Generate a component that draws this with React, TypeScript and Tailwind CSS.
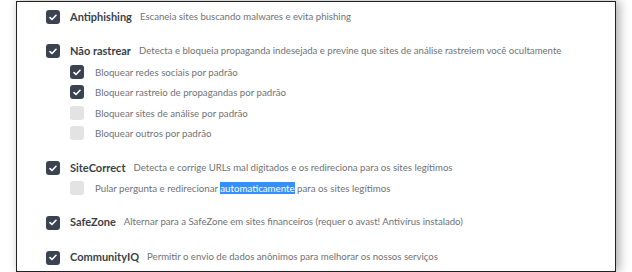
const font = { fontFamily: "Lato, 'Open Sans', sans-serif" }

const Box = ({ checked }: { checked: boolean }) => {
    return checked ? (
        <div className="w-[14px] h-[14px] rounded-[3px] bg-[#3b4350] flex items-center justify-center shrink-0">
            <svg width="8" height="7" viewBox="0 0 8 7">
                <path d="M1 3.6 L3 5.5 L7 1.3" fill="none" stroke="white" strokeWidth="1.6" strokeLinecap="round" strokeLinejoin="round" />
            </svg>
        </div>
    ) : (
        <div className="w-[14px] h-[14px] rounded-[3px] bg-[#e3e3e3] shrink-0" />
    )
}

const Main = ({ title, desc, className = "" }: { title: string, desc: string, className?: string }) => {
    return <div className={"flex items-center h-5 " + className}>
        <div className="w-[29px] shrink-0" />
        <Box checked={true} />
        <div className="ml-[10px] text-[11px] font-bold text-[#3a3f47] whitespace-nowrap">{title}</div>
        <div className="ml-[8px] text-[9.6px] text-[#6f7275] whitespace-nowrap">{desc}</div>
    </div>
}

const Sub = ({ checked, children }: { checked: boolean, children: React.ReactNode }) => {
    return <div className="flex items-center h-[20.33px]">
        <div className="w-[53px] shrink-0" />
        <Box checked={checked} />
        <div className="ml-[11px] text-[9.7px] text-[#6f7275] whitespace-nowrap">{children}</div>
    </div>
}

export default function App() {
    return <div className="w-[632px] h-[272px] bg-white overflow-hidden" style={font}>
        <div className="ml-[16px] mt-px w-[600px] h-[271px] border border-[#222] bg-white shadow-[3px_0_10px_rgba(0,0,0,0.35)] flex flex-col">
            <div className="h-[5px]" />
            <Main title="Antiphishing" desc="Escaneia sites buscando malwares e evita phishing" />
            <Main className="mt-[14px]" title="Não rastrear" desc="Detecta e bloqueia propaganda indesejada e previne que sites de análise rastreiem você ocultamente" />
            <div className="mt-px">
                <Sub checked={true}>Bloquear redes sociais por padrão</Sub>
                <Sub checked={true}>Bloquear rastreio de propagandas por padrão</Sub>
                <Sub checked={false}>Bloquear sites de análise por padrão</Sub>
                <Sub checked={false}>Bloquear outros por padrão</Sub>
            </div>
            <Main className="mt-[15px]" title="SiteCorrect" desc="Detecta e corrige URLs mal digitados e os redireciona para os sites legítimos" />
            <Sub checked={false}>
                Pular pergunta e redirecionar <span className="bg-[#3391ff] text-white">automaticamente</span> para os sites legítimos
            </Sub>
            <Main className="mt-[14px]" title="SafeZone" desc="Alternar para a SafeZone em sites financeiros (requer o avast! Antivírus instalado)" />
            <Main className="mt-[15px]" title="CommunityIQ" desc="Permitir o envio de dados anônimos para melhorar os nossos serviços" />
        </div>
    </div>
}
